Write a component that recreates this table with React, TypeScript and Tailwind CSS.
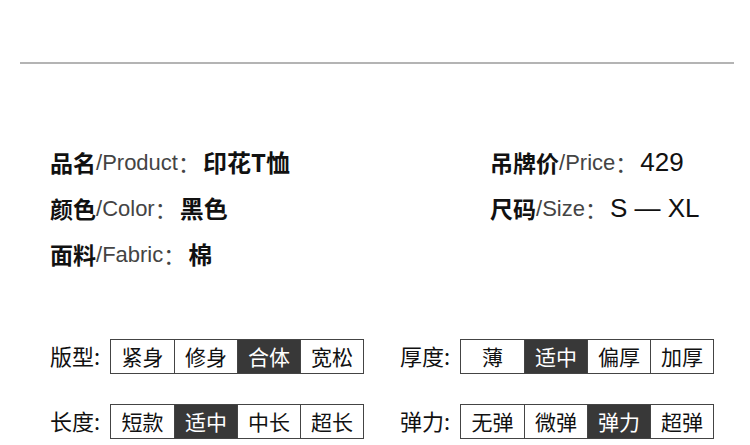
const CJK = "font-['Noto_Sans_CJK_SC','Liberation_Sans',sans-serif]";

const INFO_LEFT = [
  { cn: "品名", en: "Product", val: "印花T恤", bold: true },
  { cn: "颜色", en: "Color", val: "黑色", bold: true },
  { cn: "面料", en: "Fabric", val: "棉", bold: true },
];

const INFO_RIGHT = [
  { cn: "吊牌价", en: "Price", val: "429", bold: false },
  { cn: "尺码", en: "Size", val: "S — XL", bold: false },
];

const OPTIONS = [
  [
    { label: "版型", items: ["紧身", "修身", "合体", "宽松"], active: 2 },
    { label: "厚度", items: ["薄", "适中", "偏厚", "加厚"], active: 1 },
  ],
  [
    { label: "长度", items: ["短款", "适中", "中长", "超长"], active: 1 },
    { label: "弹力", items: ["无弹", "微弹", "弹力", "超弹"], active: 2 },
  ],
];

type Info = { cn: string; en: string; val: string; bold: boolean };

function InfoRow({ row }: { row: Info }) {
  return (
    <div className="flex h-[46px] items-center whitespace-nowrap">
      <span className={`${CJK} text-[23px] font-bold text-[#111]`}>{row.cn}</span>
      <span className="font-['Liberation_Sans',sans-serif] text-[22px] text-[#444]">/{row.en}</span>
      <span className={`${CJK} mr-[3px] text-[22px] text-[#444]`}>：</span>
      {row.bold ? (
        <span className={`${CJK} text-[24px] font-bold text-[#111]`}>{row.val}</span>
      ) : (
        <span className="font-['Liberation_Sans',sans-serif] text-[26px] text-[#111]">{row.val}</span>
      )}
    </div>
  );
}

function Picker({ label, items, active }: { label: string; items: string[]; active: number }) {
  return (
    <div className="flex items-center">
      <span className={`${CJK} -mt-[3px] w-[60px] text-[22px] leading-none text-[#111]`}>{label}:</span>
      <div className="flex h-[35px] border border-[#444]">
        {items.map((it, i) => (
          <div
            key={it}
            className={`${CJK} flex w-[63px] items-center justify-center text-[21px] ${
              i > 0 ? "border-l border-[#444]" : ""
            } ${i === active ? "bg-[#383838] text-white" : "bg-white text-[#111]"}`}
          >
            {it}
          </div>
        ))}
      </div>
    </div>
  );
}

export default function App() {
  return (
    <div className="h-[445px] w-[750px] overflow-hidden bg-white">
      <div className="h-[62px]" />
      <div className="ml-5 h-[2px] w-[714px] bg-[#b4b4b4]" />

      <div className="mt-[75px] flex pl-[50px]">
        <div className="w-[440px]">
          {INFO_LEFT.map((r) => (
            <InfoRow key={r.cn} row={r} />
          ))}
        </div>
        <div>
          {INFO_RIGHT.map((r) => (
            <InfoRow key={r.cn} row={r} />
          ))}
        </div>
      </div>

      <div className="mt-[62px] flex flex-col gap-[30px] pl-[50px]">
        {OPTIONS.map((row, i) => (
          <div key={i} className="flex gap-[36px]">
            {row.map((p) => (
              <Picker key={p.label} {...p} />
            ))}
          </div>
        ))}
      </div>
    </div>
  );
}
